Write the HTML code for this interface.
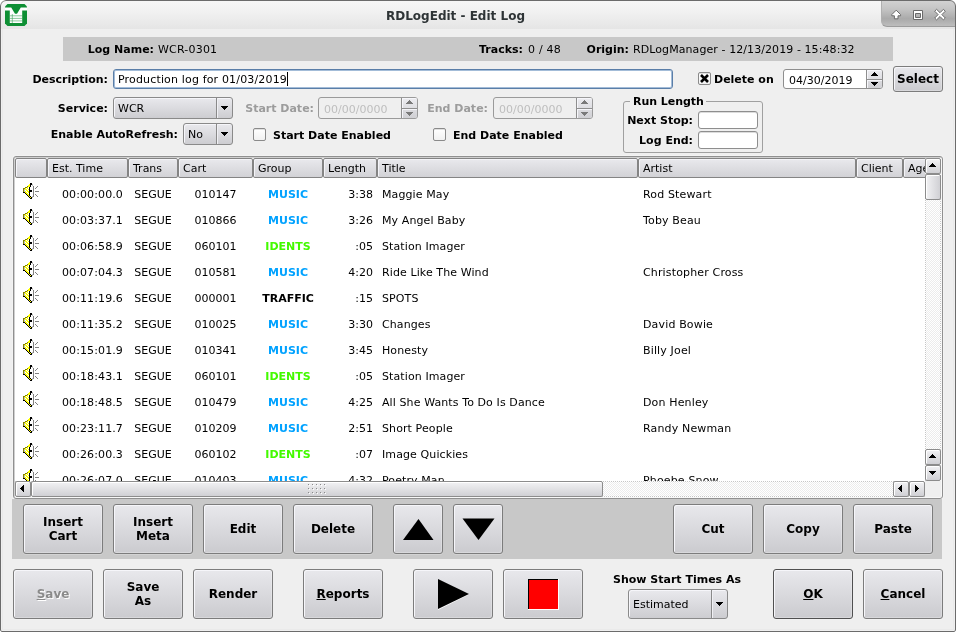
<!DOCTYPE html>
<html lang="en"><head><meta charset="utf-8"><title>RDLogEdit - Edit Log</title>
<style>
html,body{margin:0;padding:0;background:#fff;overflow:hidden}
body{width:956px;height:632px;position:relative;font-family:"DejaVu Sans","Liberation Sans",sans-serif;font-size:11px;color:#000}
#win{position:absolute;left:0;top:0;width:956px;height:632px;background:#efefef;border-radius:6px 6px 2px 2px;overflow:hidden}
#wborder{left:0;top:0;width:954px;height:630px;border:1px solid #6b6b6b;border-radius:6px 6px 2px 2px;z-index:10}
#win>*{position:absolute}
/* coordinates inside #win are target coords minus 1 */
#tbar{left:0;top:0;width:956px;height:29px;background:linear-gradient(#f7f7f7 0,#f1f1f1 40%,#e5e5e5 100%)}
#tbar .ttl{position:absolute;left:0;width:911px;top:9px;text-align:center;font:bold 12px/14px "DejaVu Sans","Liberation Sans",sans-serif;color:#2e3436}
#wbtn{left:881px;top:0;width:75px;height:27px;background:linear-gradient(#d3d3d3 0,#c4c4c4 35%,#aaaaaa 72%,#bdbdbd 100%);border-radius:0 0 0 6px;border-left:1px solid #b0b0b0;border-bottom:1px solid #9c9c9c;box-sizing:border-box}
.edgeL{left:2px;top:29px;width:1px;height:601px;background:#e9e9e9}
.edgeR{left:953px;top:29px;width:1px;height:601px;background:#eaeaea}
.edgeB{left:1px;top:629px;width:954px;height:1px;background:#eaeaea}
.b{font-weight:bold}
.lbl{white-space:nowrap;line-height:13px;height:13px}
.r{text-align:right}
.dis{color:#9c9c9c}
#band{left:63px;top:37px;width:830px;height:24px;background:#c8c8c8}
.btn{box-sizing:border-box;border:1px solid #7c7c7c;border-radius:3px;background:linear-gradient(#e8e8ec,#cbcbcf);box-shadow:inset 1px 1px 0 #f6f6fa,inset -1px -1px 0 rgba(255,255,255,.25),0 1px 0 rgba(255,255,255,.2);font:bold 12px/14px "DejaVu Sans","Liberation Sans",sans-serif;text-align:center;display:flex;align-items:center;justify-content:center}
.btn.dis{color:#8a8a8a;text-shadow:1px 1px 0 #fff}
.btn.def{border-color:#505050}
.edit{box-sizing:border-box;border:1px solid #8e8e8e;border-radius:3px;background:#fff;box-shadow:inset 0 1px 0 #dcdcdc}
.combo{box-sizing:border-box;border:1px solid #8a8a8a;border-radius:3px;background:linear-gradient(#e9e9ed,#cdcdd1);box-shadow:inset 1px 1px 0 #f6f6fa}
.combo .sep{position:absolute;top:0;bottom:0;width:1px;background:#8a8a8a;box-shadow:1px 0 0 #f0f0f4}
.combo .txt{position:absolute;left:4px;top:50%;margin-top:-6px;line-height:13px;white-space:nowrap}
.arr{position:absolute;width:0;height:0;border-left:4px solid transparent;border-right:4px solid transparent;border-top:4px solid #000}
.arrU{position:absolute;width:0;height:0;border-left:4px solid transparent;border-right:4px solid transparent;border-bottom:4px solid #000}
.cb{box-sizing:border-box;width:13px;height:13px;border:1px solid #8a8a8a;border-radius:2px;background:linear-gradient(#fff,#f1f1f1);box-shadow:inset 0 1px 0 #e0e0e0}
.spin{box-sizing:border-box;border:1px solid #8e8e8e;border-radius:3px;background:#fff}
.spin.dis{background:#efefef;border-color:#9a9a9a}
/* table */
#tframe{left:13px;top:156px;width:930px;height:343px;box-sizing:border-box;border:1px solid #909090;border-radius:3px;background:#efefef;box-shadow:0 0 0 1px #f3f3f3,inset 1px 1px 0 #d0d0d0,inset -1px -1px 0 #f8f8f8}
#tinner{position:absolute;left:1px;top:1px;width:926px;height:339px;background:#fff;overflow:hidden}
#thead{position:absolute;left:0;top:0;width:910px;height:20px;overflow:hidden;background:#efefef}
.hc{position:absolute;top:0;height:20px;box-sizing:border-box;border:1px solid #848484;border-radius:2px;background:linear-gradient(#e9e9ed,#d2d2d6);box-shadow:inset 1px 1px 0 #f4f4f8;line-height:20px;padding-left:4px;white-space:nowrap;overflow:hidden}

#tbody{position:absolute;left:0;top:20px;width:910px;height:303px;overflow:hidden;background:#fff}
.row{position:absolute;left:0;width:910px;height:26px}
.row .c{position:absolute;top:10px;line-height:13px;white-space:nowrap}
.spk{position:absolute;left:8px;top:5px;width:16px;height:16px}
.c1{left:32px;width:76px;text-align:right;letter-spacing:.12px}
.c2{left:113px;width:50px;text-align:center}
.c3{left:163px;width:75px;text-align:center}
.c4{left:238px;width:70px;text-align:center;font-weight:bold}
.c5{left:308px;width:50px;text-align:right}
.c6{left:367px;letter-spacing:.1px}
.c7{left:628px;letter-spacing:.15px}
/* scrollbars */
.trough{position:absolute}
.trough.v{background:repeating-linear-gradient(#c6c6c6 0 1px,#fff 1px 2px) 0 0/1px 100% no-repeat,repeating-linear-gradient(#fff 0 1px,#c6c6c6 1px 2px) 100% 0/1px 100% no-repeat,repeating-conic-gradient(#fff 0 25%,#ececec 0 50%) 0 0/2px 2px}
.trough.h{background:repeating-linear-gradient(90deg,#c6c6c6 0 1px,#fff 1px 2px) 0 0/100% 1px no-repeat,repeating-linear-gradient(90deg,#fff 0 1px,#c6c6c6 1px 2px) 0 100%/100% 1px no-repeat,repeating-conic-gradient(#fff 0 25%,#ececec 0 50%) 0 0/2px 2px}
.sbtn{position:absolute;box-sizing:border-box;width:16px;height:16px;border:1px solid #8c8c8c;border-radius:2px;background:linear-gradient(#f2f2f4,#d0d0d4);box-shadow:inset 1px 1px 0 #fff}
.sthumb{position:absolute;box-sizing:border-box;border:1px solid #8c8c8c;border-radius:2px;box-shadow:inset 1px 1px 0 #fff}
#bband{left:12px;top:499px;width:930px;height:60px;background:#c8c8c8}
#grp{box-sizing:border-box;border:1px solid #a0a0a0;border-radius:3px}
#desc{border-color:#5a7ea8;box-shadow:inset 0 0 0 1px #a3bcd8}
.sb2{position:absolute;box-sizing:border-box;border-left:1px solid #8e8e8e;background:linear-gradient(#ececf0,#d0d0d4);border-radius:0 2px 2px 0;box-shadow:inset 1px 1px 0 #f6f6fa}
.sb2 .hs{position:absolute;left:0;right:0;height:1px;background:#8e8e8e;box-shadow:0 1px 0 #f4f4f8}
.a{position:absolute;shape-rendering:crispEdges;fill:#000;display:block}
.a.g{fill:#7a7a7a}
#win{will-change:transform}
.arr.g{border-top-color:#7c7c7c}
.arrU.g{border-bottom-color:#7c7c7c}
.arrL{position:absolute;width:0;height:0;border-top:4px solid transparent;border-bottom:4px solid transparent;border-right:4px solid #000}
.arrR{position:absolute;width:0;height:0;border-top:4px solid transparent;border-bottom:4px solid transparent;border-left:4px solid #000}
.vth{background:linear-gradient(90deg,#f2f2f4,#d0d0d4)}
.hth{background:linear-gradient(#f2f2f4,#d0d0d4)}
.grip{position:absolute;left:276px;top:2px;width:20px;height:12px;background:
 radial-gradient(circle at 0.5px 0.5px,#8a8a8a 0.6px,transparent 0.7px) 0 0/4px 4px,
 radial-gradient(circle at 1.5px 1.5px,#fff 0.6px,transparent 0.7px) 0 0/4px 4px}
.tri{position:absolute}

</style></head>
<body>
<div id="win">
<div id="tbar">
<svg style="position:absolute;left:5px;top:4px" width="22" height="22" viewBox="0 0 22 22">
<path d="M2.5 0H19.500L22 2.500V19.500L19.500 22H2.500L0 19.500V2.500Z" fill="#0e8f34"/>
<path d="M0 3.500H6.200L10 9.800H12L15.800 3.500H22V6.400H17.200L17.200 19H4.800V6.400H0Z" fill="#fff"/>
<path d="M7.400 3.300H14.600L11.600 8.600H10.400Z" fill="#0e8f34"/>
<path d="M4.800 11.800H17.200M4.800 14.400H17.200M4.800 16.900H17.200" stroke="#3da35b" stroke-width="0.600" fill="none"/>
<path d="M7.300 10V19" stroke="#3da35b" stroke-width="0.600" fill="none"/>
</svg>
<div class="ttl">RDLogEdit - Edit Log</div>
</div>
<div id="wbtn">
<svg style="position:absolute;left:-1px;top:0" width="74" height="26" viewBox="881 0 74 26">
<g fill="#fff" stroke="#6a6a6a" stroke-width="1" stroke-linejoin="round">
<path d="M896.200 10.200L900.600 14.600V15.800H898V18.800H894.400V15.800H891.800V14.600Z"/>
<path d="M913.500 10.500H922.500V19.500H913.500ZM915.500 13.500V17.500H920.500V13.500Z" fill-rule="evenodd"/>
<path d="M934.70 11.20L936.60 9.30L940.00 12.70L943.40 9.30L945.30 11.20L941.90 14.60L945.30 18.00L943.40 19.90L940.00 16.50L936.60 19.90L934.70 18.00L938.10 14.60Z"/>
</g>
</svg>
</div>
<div id="band"></div>
<div class="lbl b r" style="left:62px;width:92px;top:43px">Log Name:</div>
<div class="lbl" style="left:158px;top:43px;letter-spacing:.2px">WCR-0301</div>
<div class="lbl b r" style="left:423px;width:100px;top:43px">Tracks:</div>
<div class="lbl" style="left:528px;top:43px;letter-spacing:.2px">0 / 48</div>
<div class="lbl b r" style="left:529px;width:100px;top:43px">Origin:</div>
<div class="lbl" style="left:633px;top:43px;letter-spacing:.08px">RDLogManager - 12/13/2019 - 15:48:32</div>

<div class="lbl b r" style="left:8px;width:100px;top:73px">Description:</div>
<div class="edit" id="desc" style="left:113px;top:69px;width:560px;height:20px"><div class="lbl" style="position:absolute;left:4px;top:3px;letter-spacing:.16px">Production log for 01/03/2019</div><div style="position:absolute;left:173px;top:2px;width:1px;height:14px;background:#000"></div></div>
<div class="cb" style="left:698px;top:72px"><svg style="position:absolute;left:1px;top:1px" width="9" height="9" viewBox="0 0 9 9"><path d="M1 1L8 8M8 1L1 8" stroke="#000" stroke-width="2.600" stroke-linecap="butt"/></svg></div>
<div class="lbl b" style="left:714px;top:73px">Delete on</div>
<div class="spin" style="left:783px;top:69px;width:100px;height:20px"><div class="lbl" style="position:absolute;left:5px;top:4px">04/30/2019</div><div class="sb2" style="left:82px;top:0;width:16px;height:18px"><i class="hs" style="top:9px"></i><svg class="a" style="left:4px;top:2px" width="7" height="4"><use href="#aU"/></svg><svg class="a" style="left:4px;top:12px" width="7" height="4"><use href="#aD"/></svg></div></div>
<div class="btn" style="left:893px;top:66px;width:50px;height:26px">Select</div>

<div class="lbl b r" style="left:8px;width:100px;top:102px">Service:</div>
<div class="combo" style="left:113px;top:97px;width:120px;height:22px"><span class="txt">WCR</span><i class="sep" style="left:102px"></i><svg class="a" style="left:107px;top:8px" width="7" height="4"><use href="#aD"/></svg></div>
<div class="lbl b r dis" style="left:214px;width:100px;top:102px">Start Date:</div>
<div class="spin dis" style="left:318px;top:97px;width:100px;height:22px"><div class="lbl" style="position:absolute;left:5px;top:5px;color:#bebebe">00/00/0000</div><div class="sb2" style="left:82px;top:0;width:16px;height:20px"><i class="hs" style="top:10px"></i><svg class="a g" style="left:4px;top:2px" width="7" height="4"><use href="#aU"/></svg><svg class="a g" style="left:4px;top:14px" width="7" height="4"><use href="#aD"/></svg></div></div>
<div class="lbl b r dis" style="left:388px;width:100px;top:102px">End Date:</div>
<div class="spin dis" style="left:493px;top:97px;width:100px;height:22px"><div class="lbl" style="position:absolute;left:5px;top:5px;color:#bebebe">00/00/0000</div><div class="sb2" style="left:82px;top:0;width:16px;height:20px"><i class="hs" style="top:10px"></i><svg class="a g" style="left:4px;top:2px" width="7" height="4"><use href="#aU"/></svg><svg class="a g" style="left:4px;top:14px" width="7" height="4"><use href="#aD"/></svg></div></div>

<div class="lbl b r" style="left:28px;width:150px;top:128px">Enable AutoRefresh:</div>
<div class="combo" style="left:183px;top:123px;width:50px;height:22px"><span class="txt">No</span><i class="sep" style="left:32px"></i><svg class="a" style="left:37px;top:8px" width="7" height="4"><use href="#aD"/></svg></div>
<div class="cb" style="left:253px;top:128px"></div>
<div class="lbl b" style="left:273px;top:129px">Start Date Enabled</div>
<div class="cb" style="left:433px;top:128px"></div>
<div class="lbl b" style="left:453px;top:129px">End Date Enabled</div>

<div id="grp" style="left:623px;top:101px;width:140px;height:52px"></div>
<div class="lbl b" style="left:630px;top:95px;background:#efefef;padding:0 2px 0 3px;letter-spacing:-.05px">Run Length</div>
<div class="lbl b r" style="left:593px;width:100px;top:114px">Next Stop:</div>
<div class="edit" style="left:698px;top:111px;width:60px;height:18px"></div>
<div class="lbl b r" style="left:593px;width:100px;top:134px">Log End:</div>
<div class="edit" style="left:698px;top:131px;width:60px;height:18px"></div>
<svg width="0" height="0" style="position:absolute"><defs>
<path id="aD" d="M0 0h7v1h-7zM1 1h5v1h-5zM2 2h3v1h-3zM3 3h1v1h-1z"/>
<path id="aU" d="M3 0h1v1h-1zM2 1h3v1h-3zM1 2h5v1h-5zM0 3h7v1h-7z"/>
<path id="aL" d="M3 0h1v7h-1zM2 1h1v5h-1zM1 2h1v3h-1zM0 3h1v1h-1z"/>
<path id="aR" d="M0 0h1v7h-1zM1 1h1v5h-1zM2 2h1v3h-1zM3 3h1v1h-1z"/>
<g id="spk" shape-rendering="crispEdges"><path fill="#000" d="M7 0h2v1h-2zM7 1h2v1h-2zM7 2h1v1h-1zM7 3h1v1h-1zM6 4h1v1h-1zM6 5h1v1h-1zM6 6h1v1h-1zM6 7h3v1h-3zM6 8h3v1h-3zM0 9h2v1h-2zM6 9h1v1h-1zM2 10h1v1h-1zM6 10h1v1h-1zM3 11h1v1h-1zM6 11h1v1h-1zM4 12h1v1h-1zM6 12h1v1h-1zM5 13h1v1h-1zM7 13h1v1h-1zM6 14h1v1h-1zM8 14h1v1h-1zM7 15h2v1h-2z"/><path fill="#ffff00" d="M6 1h1v1h-1zM5 2h2v1h-2zM5 3h2v1h-2zM4 4h1v1h-1zM2 5h1v1h-1zM4 5h1v1h-1zM2 6h2v1h-2zM5 6h1v1h-1zM3 7h2v1h-2zM2 8h1v1h-1zM4 8h2v1h-2zM2 9h2v1h-2zM5 9h1v1h-1zM3 10h2v1h-2zM4 11h2v1h-2zM5 12h1v1h-1zM6 13h1v1h-1zM7 14h1v1h-1z"/><path fill="#c0c0c0" d="M9 1h1v1h-1zM9 2h1v1h-1zM1 6h1v1h-1zM1 7h1v1h-1zM1 8h1v1h-1zM9 13h1v1h-1zM9 14h1v1h-1z"/><path fill="#fff" d="M8 2h1v1h-1zM8 3h2v1h-2zM5 4h1v1h-1zM7 4h3v1h-3zM3 5h1v1h-1zM5 5h1v1h-1zM7 5h3v1h-3zM4 6h1v1h-1zM7 6h3v1h-3zM2 7h1v1h-1zM5 7h1v1h-1zM9 7h1v1h-1zM3 8h1v1h-1zM9 8h1v1h-1zM4 9h1v1h-1zM7 9h3v1h-3zM5 10h1v1h-1zM7 10h3v1h-3zM7 11h3v1h-3zM7 12h3v1h-3zM8 13h1v1h-1z"/><path fill="#808000" d="M4 3h1v1h-1zM2 4h2v1h-2zM0 5h2v1h-2zM0 6h1v1h-1zM0 7h1v1h-1zM0 8h1v1h-1z"/><path fill="#808080" d="M10 3h1v1h-1zM14 3h1v1h-1zM10 4h1v1h-1zM13 4h1v1h-1zM10 5h1v1h-1zM12 5h1v1h-1zM10 6h1v1h-1zM10 7h1v1h-1zM10 8h1v1h-1zM12 8h4v1h-4zM10 9h1v1h-1zM10 10h1v1h-1zM10 11h1v1h-1zM12 11h1v1h-1zM10 12h1v1h-1zM13 12h1v1h-1zM10 13h1v1h-1zM14 13h1v1h-1z"/></g></defs></svg>
<div id="tframe"><div id="tinner">
<div id="thead"><div class="hc" style="left:0px;width:32px"></div><div class="hc" style="left:32px;width:81px">Est. Time</div><div class="hc" style="left:113px;width:50px">Trans</div><div class="hc" style="left:163px;width:75px">Cart</div><div class="hc" style="left:238px;width:70px">Group</div><div class="hc" style="left:308px;width:54px">Length</div><div class="hc" style="left:362px;width:261px">Title</div><div class="hc" style="left:623px;width:218px">Artist</div><div class="hc" style="left:841px;width:47px">Client</div><div class="hc" style="left:888px;width:40px">Agency</div></div>
<div id="tbody">
<div class="row" style="top:0px"><svg class="spk" viewBox="0 0 16 16"><use href="#spk"/></svg><span class="c c1">00:00:00.0</span><span class="c c2">SEGUE</span><span class="c c3">010147</span><span class="c c4" style="color:#00a2ff">MUSIC</span><span class="c c5">3:38</span><span class="c c6">Maggie May</span><span class="c c7">Rod Stewart</span></div>
<div class="row" style="top:26px"><svg class="spk" viewBox="0 0 16 16"><use href="#spk"/></svg><span class="c c1">00:03:37.1</span><span class="c c2">SEGUE</span><span class="c c3">010866</span><span class="c c4" style="color:#00a2ff">MUSIC</span><span class="c c5">3:26</span><span class="c c6">My Angel Baby</span><span class="c c7">Toby Beau</span></div>
<div class="row" style="top:52px"><svg class="spk" viewBox="0 0 16 16"><use href="#spk"/></svg><span class="c c1">00:06:58.9</span><span class="c c2">SEGUE</span><span class="c c3">060101</span><span class="c c4" style="color:#44fa00">IDENTS</span><span class="c c5">:05</span><span class="c c6">Station Imager</span><span class="c c7"></span></div>
<div class="row" style="top:78px"><svg class="spk" viewBox="0 0 16 16"><use href="#spk"/></svg><span class="c c1">00:07:04.3</span><span class="c c2">SEGUE</span><span class="c c3">010581</span><span class="c c4" style="color:#00a2ff">MUSIC</span><span class="c c5">4:20</span><span class="c c6">Ride Like The Wind</span><span class="c c7">Christopher Cross</span></div>
<div class="row" style="top:104px"><svg class="spk" viewBox="0 0 16 16"><use href="#spk"/></svg><span class="c c1">00:11:19.6</span><span class="c c2">SEGUE</span><span class="c c3">000001</span><span class="c c4" style="color:#000">TRAFFIC</span><span class="c c5">:15</span><span class="c c6">SPOTS</span><span class="c c7"></span></div>
<div class="row" style="top:130px"><svg class="spk" viewBox="0 0 16 16"><use href="#spk"/></svg><span class="c c1">00:11:35.2</span><span class="c c2">SEGUE</span><span class="c c3">010025</span><span class="c c4" style="color:#00a2ff">MUSIC</span><span class="c c5">3:30</span><span class="c c6">Changes</span><span class="c c7">David Bowie</span></div>
<div class="row" style="top:156px"><svg class="spk" viewBox="0 0 16 16"><use href="#spk"/></svg><span class="c c1">00:15:01.9</span><span class="c c2">SEGUE</span><span class="c c3">010341</span><span class="c c4" style="color:#00a2ff">MUSIC</span><span class="c c5">3:45</span><span class="c c6">Honesty</span><span class="c c7">Billy Joel</span></div>
<div class="row" style="top:182px"><svg class="spk" viewBox="0 0 16 16"><use href="#spk"/></svg><span class="c c1">00:18:43.1</span><span class="c c2">SEGUE</span><span class="c c3">060101</span><span class="c c4" style="color:#44fa00">IDENTS</span><span class="c c5">:05</span><span class="c c6">Station Imager</span><span class="c c7"></span></div>
<div class="row" style="top:208px"><svg class="spk" viewBox="0 0 16 16"><use href="#spk"/></svg><span class="c c1">00:18:48.5</span><span class="c c2">SEGUE</span><span class="c c3">010479</span><span class="c c4" style="color:#00a2ff">MUSIC</span><span class="c c5">4:25</span><span class="c c6">All She Wants To Do Is Dance</span><span class="c c7">Don Henley</span></div>
<div class="row" style="top:234px"><svg class="spk" viewBox="0 0 16 16"><use href="#spk"/></svg><span class="c c1">00:23:11.7</span><span class="c c2">SEGUE</span><span class="c c3">010209</span><span class="c c4" style="color:#00a2ff">MUSIC</span><span class="c c5">2:51</span><span class="c c6">Short People</span><span class="c c7">Randy Newman</span></div>
<div class="row" style="top:260px"><svg class="spk" viewBox="0 0 16 16"><use href="#spk"/></svg><span class="c c1">00:26:00.3</span><span class="c c2">SEGUE</span><span class="c c3">060102</span><span class="c c4" style="color:#44fa00">IDENTS</span><span class="c c5">:07</span><span class="c c6">Image Quickies</span><span class="c c7"></span></div>
<div class="row" style="top:286px"><svg class="spk" viewBox="0 0 16 16"><use href="#spk"/></svg><span class="c c1">00:26:07.0</span><span class="c c2">SEGUE</span><span class="c c3">010403</span><span class="c c4" style="color:#00a2ff">MUSIC</span><span class="c c5">4:32</span><span class="c c6">Poetry Man</span><span class="c c7">Phoebe Snow</span></div>
</div>
<div class="trough v" style="left:910px;top:0;width:16px;height:323px"></div>
<div class="sbtn" style="left:910px;top:0"><svg class="a" style="left:3px;top:4px" width="7" height="4"><use href="#aU"/></svg></div>
<div class="sthumb vth" style="left:910px;top:16px;width:16px;height:26px"></div>
<div class="sbtn" style="left:910px;top:291px"><svg class="a" style="left:3px;top:4px" width="7" height="4"><use href="#aU"/></svg></div>
<div class="sbtn" style="left:910px;top:307px"><svg class="a" style="left:3px;top:5px" width="7" height="4"><use href="#aD"/></svg></div>
<div class="trough h" style="left:0;top:323px;width:910px;height:16px"></div>
<div class="sbtn" style="left:0;top:323px"><svg class="a" style="left:4px;top:3px" width="4" height="7"><use href="#aL"/></svg></div>
<div class="sthumb hth" style="left:16px;top:323px;width:572px;height:16px"><i class="grip"></i></div>
<div class="sbtn" style="left:878px;top:323px"><svg class="a" style="left:4px;top:3px" width="4" height="7"><use href="#aL"/></svg></div>
<div class="sbtn" style="left:894px;top:323px"><svg class="a" style="left:5px;top:3px" width="4" height="7"><use href="#aR"/></svg></div>
<div style="position:absolute;left:910px;top:323px;width:16px;height:16px;background:#efefef"></div>
</div></div>
<div id="bband"></div>
<div class="btn" style="left:23px;top:504px;width:80px;height:50px">Insert<br>Cart</div>
<div class="btn" style="left:113px;top:504px;width:80px;height:50px">Insert<br>Meta</div>
<div class="btn" style="left:203px;top:504px;width:80px;height:50px">Edit</div>
<div class="btn" style="left:293px;top:504px;width:80px;height:50px">Delete</div>
<div class="btn" style="left:393px;top:504px;width:50px;height:50px"><svg width="48" height="48" viewBox="394 505 48 48"><path d="M418.500 519L433.500 540H403Z" fill="#000"/></svg></div>
<div class="btn" style="left:453px;top:504px;width:50px;height:50px"><svg width="48" height="48" viewBox="454 505 48 48"><path d="M478.500 540L494.500 518.500H462.500Z" fill="#000"/></svg></div>
<div class="btn" style="left:673px;top:504px;width:80px;height:50px">Cut</div>
<div class="btn" style="left:763px;top:504px;width:80px;height:50px">Copy</div>
<div class="btn" style="left:853px;top:504px;width:80px;height:50px">Paste</div>

<div class="btn dis" style="left:13px;top:569px;width:80px;height:50px"><span><u>S</u>ave</span></div>
<div class="btn" style="left:103px;top:569px;width:80px;height:50px">Save<br>As</div>
<div class="btn" style="left:193px;top:569px;width:80px;height:50px">Render</div>
<div class="btn" style="left:303px;top:569px;width:80px;height:50px"><span><u>R</u>eports</span></div>
<div class="btn" style="left:413px;top:569px;width:80px;height:50px"><svg width="78" height="48" viewBox="414 570 78 48"><path d="M438 579.500L469 594.500L438 610Z" fill="#fff"/><path d="M438 579L469 594L438 609Z" fill="#000"/></svg></div>
<div class="btn" style="left:503px;top:569px;width:80px;height:50px"><svg width="78" height="48" viewBox="504 570 78 48"><rect x="528" y="579" width="31" height="31" fill="#fff"/><rect x="528" y="579" width="30" height="30" fill="#000"/><rect x="529" y="580" width="29" height="29" fill="#ff0000"/></svg></div>
<div class="lbl b" style="left:613px;top:573px">Show Start Times As</div>
<div class="combo" style="left:628px;top:589px;width:100px;height:30px"><span class="txt" style="left:4px">Estimated</span><i class="sep" style="left:82px"></i><svg class="a" style="left:87px;top:12px" width="7" height="4"><use href="#aD"/></svg></div>
<div class="btn def" style="left:773px;top:569px;width:80px;height:50px"><span><u>O</u>K</span></div>
<div class="btn" style="left:863px;top:569px;width:80px;height:50px"><span><u>C</u>ancel</span></div>
<div class="edgeL"></div><div class="edgeR"></div><div class="edgeB"></div>
<div id="wborder"></div>
</div>
</body></html>
